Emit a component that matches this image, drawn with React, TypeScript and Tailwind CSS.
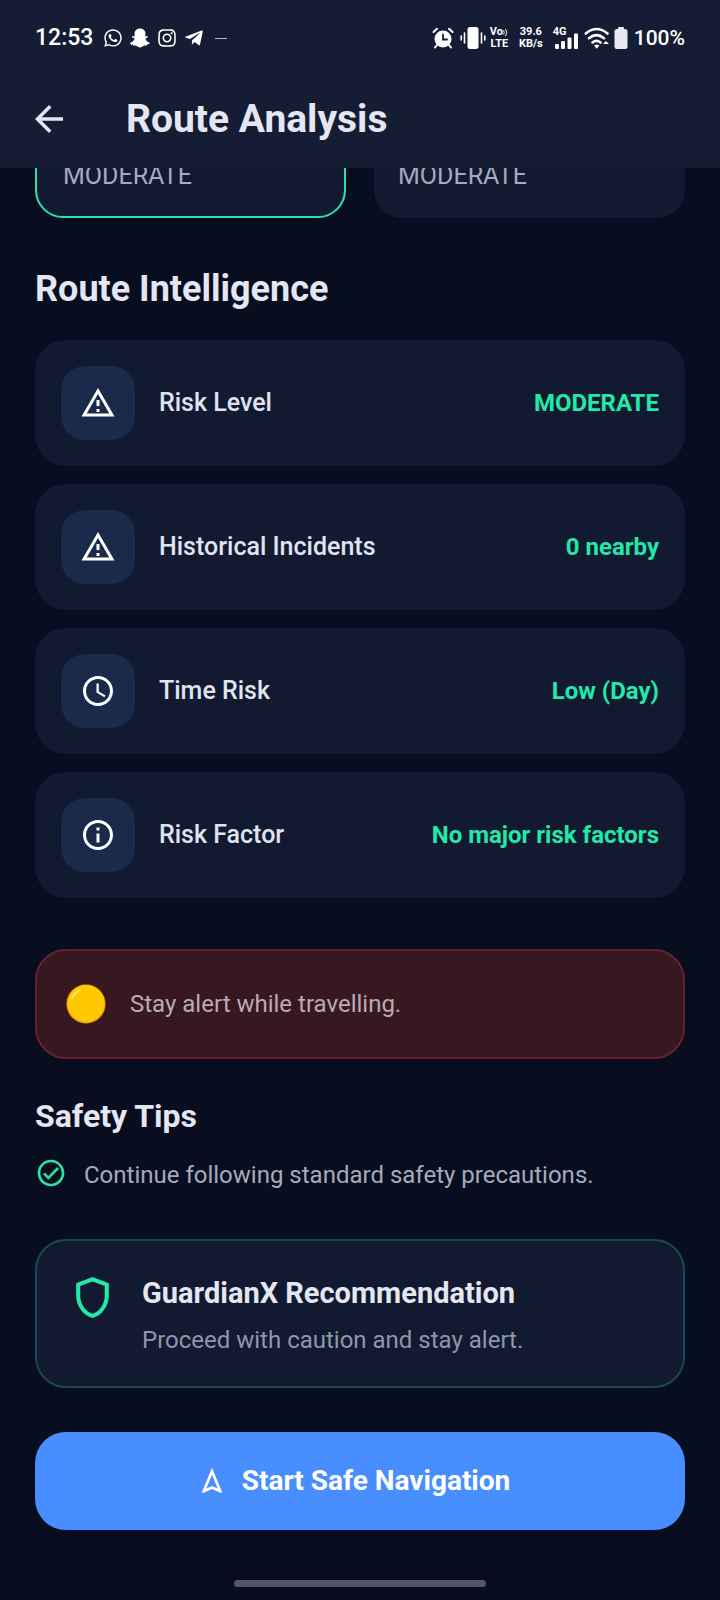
import type { ReactNode } from "react";
import { FaInstagram, FaSnapchatGhost, FaTelegramPlane, FaWhatsapp } from "react-icons/fa";

const icons = {
  back: <path d="M20 11H7.83l5.59-5.59L12 4l-8 8 8 8 1.41-1.41L7.83 13H20v-2z" />,
  warning: (
    <path d="M12 5.99 19.53 19H4.47L12 5.99M12 2 1 21h22L12 2zm1 14h-2v2h2v-2zm0-6h-2v4h2v-4z" />
  ),
  clock: (
    <path d="M11.99 2C6.47 2 2 6.48 2 12s4.47 10 9.99 10C17.52 22 22 17.52 22 12S17.52 2 11.99 2zM12 20c-4.42 0-8-3.58-8-8s3.58-8 8-8 8 3.58 8 8-3.58 8-8 8zm.5-13H11v6l5.25 3.15.75-1.23-4.5-2.67z" />
  ),
  info: (
    <path d="M11 7h2v2h-2zm0 4h2v6h-2zm1-9C6.48 2 2 6.48 2 12s4.48 10 10 10 10-4.48 10-10S17.52 2 12 2zm0 18c-4.41 0-8-3.59-8-8s3.59-8 8-8 8 3.59 8 8-3.59 8-8 8z" />
  ),
  check: (
    <path d="M16.59 7.58 10 14.17l-2.59-2.58L6 13l4 4 8-8-1.41-1.42zM12 2C6.48 2 2 6.48 2 12s4.48 10 10 10 10-4.48 10-10S17.52 2 12 2zm0 18c-4.42 0-8-3.58-8-8s3.58-8 8-8 8 3.58 8 8-3.58 8-8 8z" />
  ),
  shield: (
    <path d="M12 2 4 5v6.09c0 5.05 3.41 9.76 8 10.91 4.59-1.15 8-5.86 8-10.91V5l-8-3zm6 9.09c0 4-2.55 7.7-6 8.83-3.45-1.13-6-4.82-6-8.83v-4.7l6-2.25 6 2.25v4.7z" />
  ),
  navigation: (
    <path d="m12 7.27 4.28 10.43-3.47-1.53-.81-.36-.81.36-3.47 1.53L12 7.27M12 2 4.5 20.29l.71.71L12 18l6.79 3 .71-.71L12 2z" />
  ),
};

type IconName = keyof typeof icons;

function Icon({ name, className }: { name: IconName; className: string }) {
  return (
    <svg viewBox="0 0 24 24" fill="currentColor" aria-hidden="true" className={`shrink-0 ${className}`}>
      {icons[name]}
    </svg>
  );
}

const routes = [
  { id: "safest", level: "MODERATE", selected: true },
  { id: "fastest", level: "MODERATE", selected: false },
];

const intelligence: { icon: IconName; label: string; value: string }[] = [
  { icon: "warning", label: "Risk Level", value: "MODERATE" },
  { icon: "warning", label: "Historical Incidents", value: "0 nearby" },
  { icon: "clock", label: "Time Risk", value: "Low (Day)" },
  { icon: "info", label: "Risk Factor", value: "No major risk factors" },
];

const tips = ["Continue following standard safety precautions."];

function StatusBar() {
  return (
    <div className="flex h-[76px] items-center justify-between px-[35px] text-white">
      <div className="flex items-center">
        <span className="text-[23px] leading-7 font-medium">12:53</span>
        <div className="ml-2.5 flex items-center gap-[7px]">
          <FaWhatsapp className="size-[20px]" />
          <FaSnapchatGhost className="size-[20px]" />
          <FaInstagram className="size-[20px]" />
          <FaTelegramPlane className="size-[20px]" />
          <span className="ml-1 h-px w-3 bg-white/70" />
        </div>
      </div>

      <div className="flex items-center">
        {/* Alarm */}
        <svg viewBox="0 0 22 22" className="size-[22px]" fill="none" stroke="currentColor" strokeLinecap="round">
          <path d="M1.5 5 5 1.8M20.5 5 17 1.8M5 18l-2 2.5M17 18l2 2.5" strokeWidth="2" />
          <circle cx="11" cy="12" r="8.5" fill="currentColor" stroke="none" />
          <path d="M11 7.5v5h4" stroke="#151d34" strokeWidth="1.8" />
        </svg>
        {/* Vibrate */}
        <svg viewBox="0 0 26 22" className="ml-1.5 h-[22px] w-[26px]" fill="none" stroke="currentColor" strokeLinecap="round">
          <rect x="7.5" y="0" width="11" height="22" rx="2.5" fill="currentColor" stroke="none" />
          <path d="M4.5 6v10M1.2 9v4M21.5 6v10M24.8 9v4" strokeWidth="1.6" />
        </svg>
        <div className="ml-1 flex flex-col items-center text-[11px] leading-3 font-bold">
          <span className="flex items-center">
            Vo
            <svg viewBox="0 0 6 9" className="h-[9px] w-[6px]" fill="none" stroke="currentColor">
              <path d="M.5 2.5q1.5 2 0 4M2.5 1q2.5 3.5 0 7" />
            </svg>
          </span>
          <span>LTE</span>
        </div>
        <div className="ml-2.5 flex flex-col items-center text-[11px] leading-3 font-bold">
          <span>39.6</span>
          <span>KB/s</span>
        </div>
        <div className="ml-2.5 flex flex-col text-[11px] leading-[10px] font-bold">
          <span>4G</span>
          <svg viewBox="0 0 25 16" className="-mt-1 h-4 w-[25px]" fill="currentColor">
            <rect x="2" y="11" width="4" height="5" rx="1" />
            <rect x="8" y="8" width="4" height="8" rx="1" />
            <rect x="14.5" y="4.5" width="4" height="11.5" rx="1" />
            <rect x="21" y="0.5" width="4" height="15.5" rx="1" />
          </svg>
        </div>
        {/* Wifi */}
        <svg viewBox="0 0 26 22" className="ml-1.5 h-[22px] w-[26px]" fill="none" stroke="currentColor" strokeWidth="2.6" strokeLinecap="round">
          <path d="M1.8 6.5Q12.5-2.5 23.5 6.5M5 11.2q7.5-6.2 15 0M8.5 15.5q4-3.4 8 0" />
          <path d="m10 18.5 2.7 3.2 2.7-3.2q-2.7-1.8-5.4 0z" fill="currentColor" stroke="none" />
          <path d="m19 17 3-3 3 3z" fill="currentColor" stroke="none" />
        </svg>
        {/* Battery */}
        <svg viewBox="0 0 14 22" className="ml-1 h-[22px] w-[14px]" fill="#e9e9f0">
          <rect x="4" y="0" width="6" height="4" rx="1" />
          <rect x="0.5" y="2" width="13" height="20" rx="2.5" />
        </svg>
        <span className="ml-1.5 text-[21px] leading-7 font-medium">100%</span>
      </div>
    </div>
  );
}

function SectionTitle({ children, className }: { children: ReactNode; className: string }) {
  return <h2 className={`font-bold text-[#e4e6f2] ${className}`}>{children}</h2>;
}

export default function App() {
  return (
    <div className="flex min-h-screen flex-col bg-[#080e20] font-[Roboto,sans-serif]">
      <header className="bg-[#151d34]">
        <StatusBar />
        <div className="flex h-[92px] items-center gap-14 pb-[7px] pl-7">
          <button type="button" aria-label="Back" className="text-[#e4e6f2]">
            <Icon name="back" className="size-[42px]" />
          </button>
          <h1 className="text-[39px] leading-[46px] font-bold text-[#e4e6f2]">Route Analysis</h1>
        </div>
      </header>

      <main className="flex flex-1 flex-col px-[35px]">
        {/* Route options, scrolled up under the header */}
        <div className="grid h-[50px] grid-cols-2 content-end gap-7 overflow-hidden">
          {routes.map((route) => (
            <div
              key={route.id}
              className={`flex h-[120px] flex-col justify-end rounded-[28px] bg-[#111a30] ${
                route.selected ? "border-2 border-[#2be3a5] px-[26px] pb-[26px]" : "px-6 pb-7"
              }`}
            >
              <span className="text-[25px] leading-7 text-[#a5abbd]">{route.level}</span>
            </div>
          ))}
        </div>

        <SectionTitle className="mt-[51px] text-[36px] leading-10">Route Intelligence</SectionTitle>

        <ul className="mt-[31px] flex flex-col gap-[18px]">
          {intelligence.map((item) => (
            <li key={item.label} className="flex items-center rounded-[31px] bg-[#111a30] p-[26px]">
              <div className="flex size-[74px] items-center justify-center rounded-3xl bg-[#1a2a4a] text-white">
                <Icon name={item.icon} className="size-[36px]" />
              </div>
              <span className="ml-6 flex-1 text-[25px] leading-7 font-medium text-[#e0e3f0]">{item.label}</span>
              <span className="text-[24px] leading-7 font-bold text-[#22e8a8]">{item.value}</span>
            </li>
          ))}
        </ul>

        <div
          role="alert"
          className="mt-[51px] flex h-[110px] items-center rounded-[31px] border-2 border-[#642230] bg-[#381820] px-[29px]"
        >
          <svg viewBox="0 0 40 40" className="size-10" aria-hidden="true">
            <circle cx="20" cy="20" r="19.5" fill="#f5a300" />
            <circle cx="20" cy="19.5" r="18.5" fill="#ffc800" />
            <path d="M6 14q3-6 8-8" fill="none" stroke="#ffe060" strokeWidth="2" strokeLinecap="round" />
          </svg>
          <p className="ml-6 text-[24px] leading-7 text-[#b9abb3]">Stay alert while travelling.</p>
        </div>

        <SectionTitle className="mt-[39px] text-[32px] leading-9">Safety Tips</SectionTitle>

        <ul className="mt-[23px] flex flex-col gap-3">
          {tips.map((tip) => (
            <li key={tip} className="flex items-start gap-[17px]">
              <Icon name="check" className="size-8 text-[#2be3a5]" />
              <span className="text-[24px] leading-9 text-[#a5abbd]">{tip}</span>
            </li>
          ))}
        </ul>

        <section className="mt-[46px] flex gap-[25px] rounded-[31px] border-2 border-[#1c4a4c] bg-[#111a30] px-[31px] pt-8 pb-[30px]">
          <Icon name="shield" className="size-[49px] text-[#22e8a8]" />
          <div>
            <h3 className="mt-0.5 text-[29px] leading-9 font-bold text-[#e4e6f2]">GuardianX Recommendation</h3>
            <p className="mt-[13px] text-[24px] leading-8 text-[#8f96a8]">Proceed with caution and stay alert.</p>
          </div>
        </section>

        <button
          type="button"
          className="mt-11 flex h-[98px] items-center justify-center gap-3.5 rounded-[31px] bg-[#488eff] pr-3.5 text-[28px] leading-8 font-bold text-white"
        >
          <Icon name="navigation" className="size-8" />
          Start Safe Navigation
        </button>
      </main>

      <div className="flex justify-center pt-[50px] pb-[13px]">
        <div className="h-[7px] w-[252px] rounded-full bg-[#525665]" />
      </div>
    </div>
  );
}
